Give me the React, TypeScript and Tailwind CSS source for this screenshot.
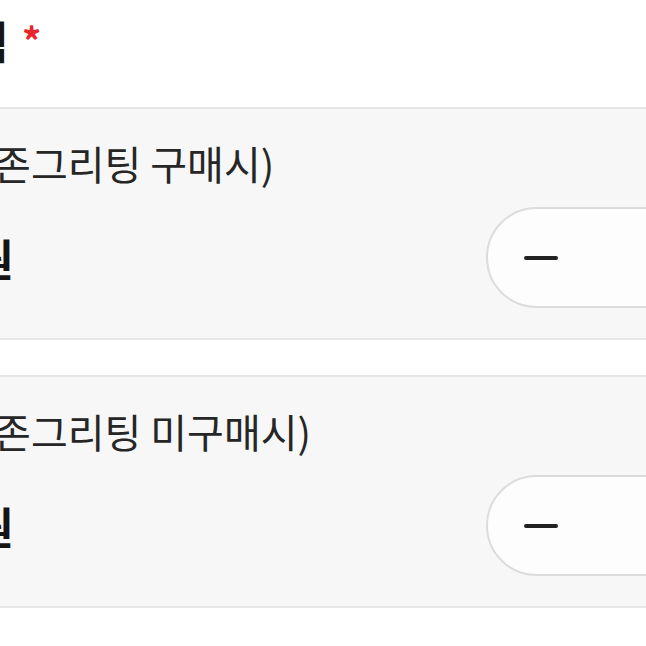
interface OptionCardProps {
  title: string;
  price: string;
}

function OptionCard({ title, price }: OptionCardProps) {
  return (
    <div className="border-y-2 border-[#e6e6e6] bg-[#f7f7f7] pt-[34px] pb-[30px]">
      <div className="-ml-[93px] h-[40px] whitespace-nowrap text-[40px] leading-[40px] text-[#262626]">
        {title}
      </div>
      <div className="mt-[24px] flex items-center">
        <div className="-ml-[145px] w-[631px] shrink-0 whitespace-nowrap text-[44px] font-bold leading-[50px] text-[#151515]">
          {price}
        </div>
        <div className="flex h-[101px] w-[320px] shrink-0 items-center rounded-full border-2 border-[#dcdcdc] bg-[#fdfdfd] pl-[36px]">
          <span className="block h-[4px] w-[34px] rounded-full bg-[#222]" />
        </div>
      </div>
    </div>
  );
}

export default function App() {
  return (
    <div className="h-[646px] w-[646px] overflow-hidden bg-white font-['Noto_Sans_CJK_KR','Noto_Sans',sans-serif]">
      <div className="w-[800px]">
        <div className="flex h-[107px] items-start pt-[14px]">
          <h2 className="-ml-[164px] flex items-start whitespace-nowrap text-[44px] font-bold leading-[52px] text-[#151515]">
            옵션 선택
            <span className="ml-[14px] mt-[4px] text-[38px] leading-[44px] text-[#e8262b]">*</span>
          </h2>
        </div>
        <OptionCard title="(웰컴존그리팅 구매시)" price="5,000원" />
        <div className="h-[35px]" />
        <OptionCard title="(웰컴존그리팅 미구매시)" price="8,000원" />
      </div>
    </div>
  );
}
